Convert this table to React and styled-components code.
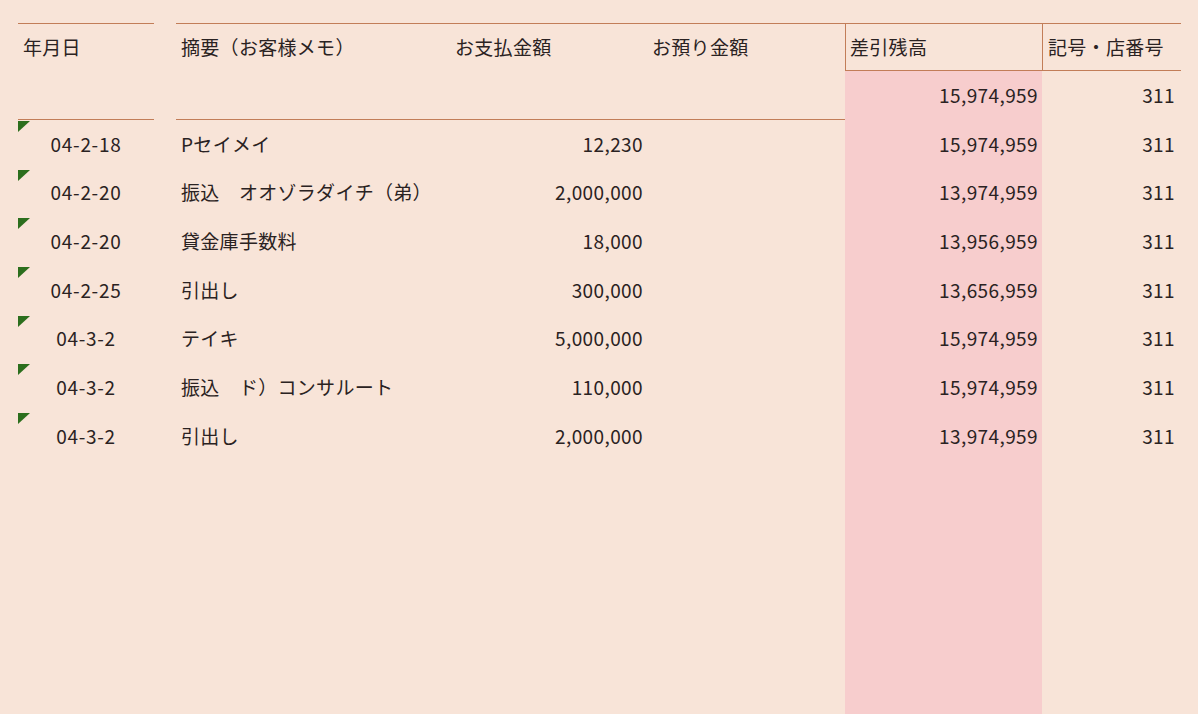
import React from "react";
import styled, { createGlobalStyle } from "styled-components";

const rows = [
  { date: "04-2-18", memo: "Pセイメイ", pay: "12,230", bal: "15,974,959" },
  { date: "04-2-20", memo: "振込　オオゾラダイチ（弟）", pay: "2,000,000", bal: "13,974,959" },
  { date: "04-2-20", memo: "貸金庫手数料", pay: "18,000", bal: "13,956,959" },
  { date: "04-2-25", memo: "引出し", pay: "300,000", bal: "13,656,959" },
  { date: "04-3-2", memo: "テイキ", pay: "5,000,000", bal: "15,974,959" },
  { date: "04-3-2", memo: "振込　ド）コンサルート", pay: "110,000", bal: "15,974,959" },
  { date: "04-3-2", memo: "引出し", pay: "2,000,000", bal: "13,974,959" },
];

function App() {
  return (
    <>
      <GlobalStyle />
      <Sheet>
        <Cell $top>年月日</Cell>
        <Gap />
        <Cell $top>摘要（お客様メモ）</Cell>
        <Cell $top $pad="95px">お支払金額</Cell>
        <Cell $top $pad="7px">お預り金額</Cell>
        <Cell $top $left $bottom $pad="4px">差引残高</Cell>
        <Cell $top $left $bottom $pad="5px">記号・店番号</Cell>

        <Cell $bottom />
        <Gap />
        <Cell $bottom />
        <Cell $bottom />
        <Cell $bottom />
        <Num $pink $pad="4px">15,974,959</Num>
        <Num $pad="6px">311</Num>

        {rows.map((r, i) => (
          <React.Fragment key={i}>
            <DateCell>
              <Marker />
              {r.date}
            </DateCell>
            <Gap />
            <Cell>{r.memo}</Cell>
            <Num $pad="2px">{r.pay}</Num>
            <Cell />
            <Num $pink $pad="4px">{r.bal}</Num>
            <Num $pad="6px">311</Num>
          </React.Fragment>
        ))}

        <Cell />
        <Gap />
        <Cell />
        <Cell />
        <Cell />
        <Cell $pink />
        <Cell />
      </Sheet>
    </>
  );
}

export default App;

const GlobalStyle = createGlobalStyle`
  html, body {
    margin: 0;
    padding: 0;
    background: #f8e4d8;
  }
  body {
    font-family: "Noto Sans CJK JP", "Noto Sans", sans-serif;
    color: #2a2222;
  }
`;

const Sheet = styled.div`
  box-sizing: border-box;
  height: 714px;
  padding: 23px 17px 0 18px;
  display: grid;
  grid-template-columns: 136px 22px 184px 285px 200px 197px 139px;
  grid-template-rows: 48px 49px repeat(7, 48.67px) 1fr;
  font-size: 19px;
  letter-spacing: 0.3px;
  overflow: hidden;
`;

const line = "1px solid #c27d58";

const Cell = styled.div`
  box-sizing: border-box;
  display: flex;
  align-items: center;
  justify-content: flex-start;
  padding: 0 0 2px ${(p) => p.$pad || "5px"};
  white-space: nowrap;
  background: ${(p) => (p.$pink ? "#f7cdcd" : "transparent")};
  border-top: ${(p) => (p.$top ? line : "none")};
  border-bottom: ${(p) => (p.$bottom ? line : "none")};
  border-left: ${(p) => (p.$left ? line : "none")};
  line-height: 1;
`;

const Num = styled(Cell)`
  justify-content: flex-end;
  padding: 0 ${(p) => p.$pad || "5px"} 2px 0;
  letter-spacing: 0.4px;
`;

const Gap = styled.div``;

const DateCell = styled(Cell)`
  position: relative;
  justify-content: center;
  padding: 0 0 2px 0;
  letter-spacing: 0.7px;
`;

const Marker = styled.span`
  position: absolute;
  top: 1px;
  left: 0;
  width: 0;
  height: 0;
  border-top: 11px solid #2c6e1d;
  border-right: 12px solid transparent;
`;
